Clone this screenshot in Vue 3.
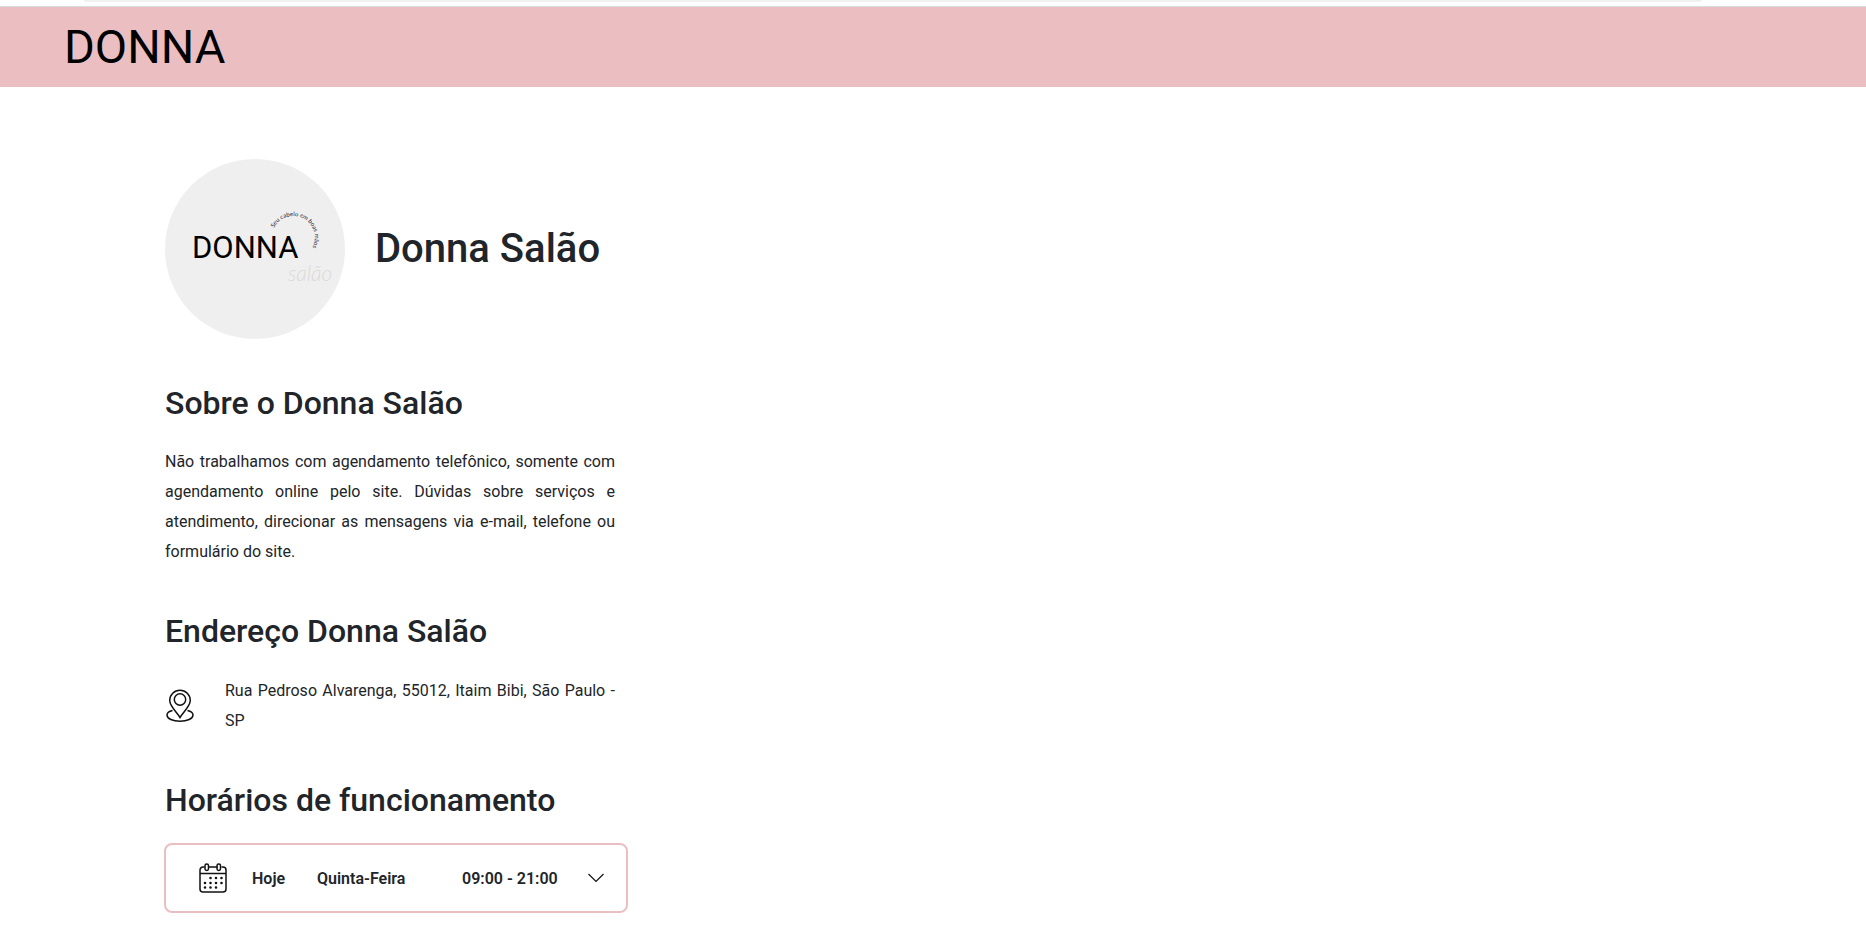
<script setup>
import { ref } from 'vue'

const open = ref(false)
const today = { label: 'Hoje', day: 'Quinta-Feira', hours: '09:00 - 21:00' }
</script>

<template>
  <div class="page">
    <div class="strip"><div class="pill"></div></div>
    <header class="topbar">
      <a href="#" class="brand">DONNA</a>
    </header>

    <main class="content">
      <section class="profile">
        <svg class="avatar" viewBox="0 0 180 180" role="img" aria-label="Donna Salão">
          <defs>
            <path id="slogan-arc" d="M109 69A21.500 21.500 0 1 1 145 92" />
          </defs>
          <circle cx="90" cy="90" r="90" fill="#efefef" />
          <text class="mark" x="27" y="99">DONNA</text>
          <text class="slogan"><textPath href="#slogan-arc">Seu cabelo em boas mãos</textPath></text>
          <text class="script" x="123" y="122">salão</text>
        </svg>
        <h1>Donna Salão</h1>
      </section>

      <section>
        <h2>Sobre o Donna Salão</h2>
        <p>
          Não trabalhamos com agendamento telefônico, somente com agendamento online pelo site.
          Dúvidas sobre serviços e atendimento, direcionar as mensagens via e-mail, telefone ou
          formulário do site.
        </p>
      </section>

      <section>
        <h2>Endereço Donna Salão</h2>
        <div class="address">
          <svg class="pin" viewBox="0 0 30 34" aria-hidden="true">
            <path d="M15 28.500C12 23.500 4.700 17 4.700 11.500a10.300 10.300 0 0 1 20.600 0C25.300 17 18 23.500 15 28.500z" />
            <circle cx="15" cy="10.500" r="5.700" />
            <path d="M7.500 21.500C4 22.300 2 23.800 2 26c0 3.700 5.800 6.300 13 6.300S28 29.700 28 26c0-2.200-2-3.700-5.500-4.500" />
          </svg>
          <p>Rua Pedroso Alvarenga, 55012, Itaim Bibi, São Paulo - SP</p>
        </div>
      </section>

      <section>
        <h2>Horários de funcionamento</h2>
        <button type="button" class="hours" :aria-expanded="open" @click="open = !open">
          <svg class="calendar" viewBox="0 0 28 30" aria-hidden="true">
            <path d="M5.500 4H4a3 3 0 0 0-3 3v19a3 3 0 0 0 3 3h20a3 3 0 0 0 3-3V7a3 3 0 0 0-3-3h-1.500M9.500 4h9M1 10.500h26" />
            <rect x="6" y="1" width="3.500" height="6.500" rx="1.700" />
            <rect x="18" y="1" width="3.500" height="6.500" rx="1.700" />
            <path class="dots" d="M11.500 15h0M17 15h0M22.500 15h0M6 20h0M11.500 20h0M17 20h0M22.500 20h0M6 24.500h0M11.500 24.500h0M17 24.500h0" />
          </svg>
          <span>{{ today.label }}</span>
          <span>{{ today.day }}</span>
          <span>{{ today.hours }}</span>
          <svg class="chevron" viewBox="0 0 16 10" aria-hidden="true">
            <path d="M0.500 1L8 8.500L15.500 1" />
          </svg>
        </button>
      </section>
    </main>
  </div>
</template>

<style>
body {
  margin: 0;
  background: #fff;
}
</style>

<style scoped>
.page {
  font-family: Roboto, "Liberation Sans", sans-serif;
  font-size: 16px;
  color: #212529;
}
.strip {
  height: 6px;
  padding: 0 164px 0 84px;
  border-bottom: 1px solid #d9dbde;
}
.pill {
  height: 2px;
  background: #f1f1f2;
  border-radius: 0 0 8px 8px;
}
.topbar {
  display: flex;
  align-items: center;
  height: 80px;
  padding: 0 64px;
  background: #ebbfc2;
}
.brand {
  font-size: 47px;
  line-height: 56px;
  color: #000;
  text-decoration: none;
}
.content {
  display: flex;
  flex-direction: column;
  gap: 45px;
  max-width: 450px;
  margin-left: 165px;
  padding: 72px 0 24px;
}
.profile {
  display: flex;
  align-items: center;
  gap: 30px;
}
.avatar {
  flex: none;
  width: 180px;
  height: 180px;
}
.mark {
  font-size: 31px;
  fill: #000;
}
.slogan {
  font-family: Lato, sans-serif;
  font-size: 6px;
  fill: #1c2440;
}
.script {
  font-family: Lato, sans-serif;
  font-size: 21px;
  font-style: italic;
  font-weight: 300;
  fill: #dadada;
}
h1,
h2 {
  margin: 0;
  font-weight: 500;
  white-space: nowrap;
}
h1 {
  font-size: 40px;
  line-height: 48px;
}
h2 {
  font-size: 32px;
  line-height: 38px;
}
p {
  margin: 0;
  line-height: 30px;
  text-align: justify;
}
h2 + p {
  margin-top: 25px;
}
.address {
  display: flex;
  align-items: center;
  gap: 30px;
  margin-top: 26px;
}
.pin {
  flex: none;
  width: 30px;
  height: 34px;
}
.pin,
.calendar,
.chevron {
  fill: none;
  stroke: #111;
  stroke-width: 1.5;
}
.hours {
  display: grid;
  grid-template-columns: 53px 65px 145px 126px 16px;
  align-items: center;
  box-sizing: border-box;
  width: 464px;
  height: 70px;
  margin: 24px -14px 0 -1px;
  padding: 0 22px 0 33px;
  border: 2px solid #ebbfc2;
  border-radius: 8px;
  background: #fff;
  color: inherit;
  font: inherit;
  font-weight: 600;
  text-align: left;
  cursor: pointer;
}
.calendar {
  width: 28px;
  height: 30px;
}
.dots {
  stroke-width: 2.6;
  stroke-linecap: round;
}
.chevron {
  width: 16px;
  height: 10px;
  stroke-width: 1.2;
}
</style>
